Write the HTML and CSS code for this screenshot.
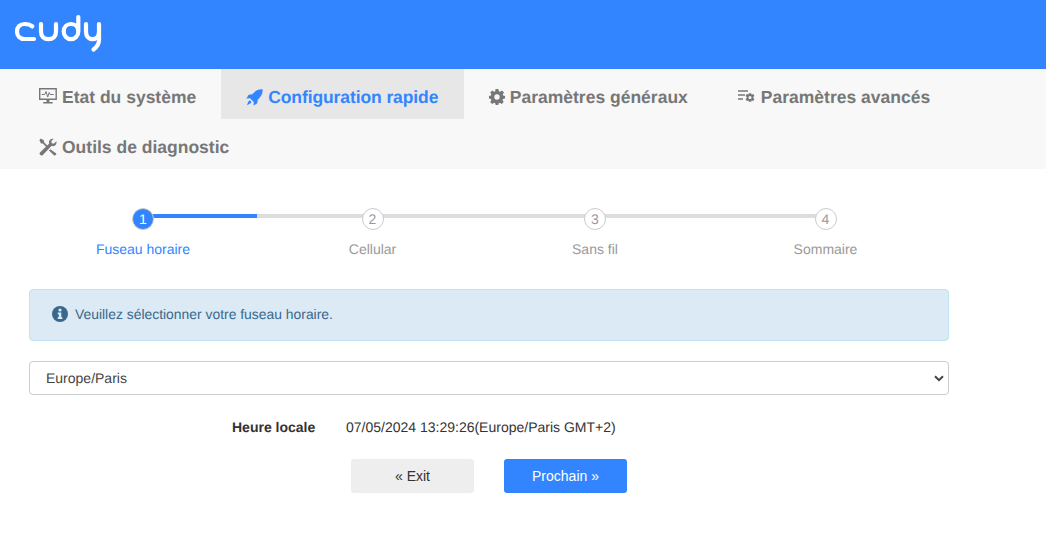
FILE: index.html
```html
<!DOCTYPE html>
<html lang="fr">
<head>
<meta charset="utf-8">
<title>Cudy</title>
<link rel="stylesheet" href="styles.css">
</head>
<body>
<header class="topbar">
  <svg class="logo" width="90" height="40" viewBox="0 0 90 40" fill="none" stroke="#fff" stroke-width="4.200" stroke-linecap="round">
    <path d="M20.300 12.400C18.700 10.900 16 10 12.500 10 8 10 5 13 5 17.500 5 22 8 25 12.500 25H22"/>
    <path d="M29 10V17.500C29 22.500 32 25.200 36.500 25.200 41 25.200 44 22.500 44 17.500V10"/>
    <path d="M66.300 3V17.500C66.300 22 63 25.200 59 25.200 55 25.200 51.700 22 51.700 17.500 51.700 13 55 10 59 10 63 10 66.300 13 66.300 17.500"/>
    <path d="M74 10V17.500C74 22.500 76.500 25.200 80.500 25.200 84.500 25.200 87 22.500 87 17.500V10M87 17V26C87 30 85 33 81.500 35.500"/>
  </svg>
</header>

<nav class="tabs">
  <a class="tab">
    <svg class="ico" width="18" height="18" viewBox="1.300 2 18 18"><path fill="none" stroke="currentColor" stroke-width="1.400" d="M2 2.700H18.500V13.300H2Z"/><path fill="none" stroke="currentColor" stroke-width="1" d="M4 8.500H7L8.300 5.500 10 11 11.500 6.500 12.500 8.500H16"/><path fill="currentColor" d="M8.800 14H11.700V16H15V17.500H5.500V16H8.800Z"/></svg>
    Etat du système
  </a>
  <a class="tab tab-active">
    <svg class="ico" width="17" height="17" viewBox="0 0 17 17"><path fill="currentColor" d="M16.600.4C16.900 4.500 15.300 8 11.700 10.700L11.300 14.300 7.500 16.600 7.800 13 4 9.200.4 9.500 2.700 5.700 6.300 5.300C9 1.700 12.500.1 16.600.4ZM3 11.700C4 11.400 5 12 5.300 13 5.200 14.500 3 15.300.9 16.100 1.700 14 2.300 12.500 3 11.700Z"/></svg>
    Configuration rapide
  </a>
  <a class="tab">
    <svg class="ico" width="16" height="16" viewBox="0 0 16 16"><path fill="currentColor" fill-rule="evenodd" d="M6.600 0H9.400L9.900 2.200 11 2.700 13 1.500 15 3.500 13.700 5.400 14.200 6.500 16 6.900V9.500L14 10 13.500 11.100 14.700 13 12.700 15 10.800 13.800 9.700 14.200 9.300 16H6.700L6.200 14.200 5.100 13.800 3.200 15 1.200 13 2.400 11.100 1.900 10 0 9.500V6.900L1.900 6.500 2.400 5.400 1.200 3.500 3.200 1.500 5.100 2.700 6.200 2.200ZM8 5.300A2.700 2.700 0 1 0 8 10.700 2.700 2.700 0 1 0 8 5.300Z"/></svg>
    Paramètres généraux
  </a>
  <a class="tab">
    <svg class="ico" width="18" height="16" viewBox="0 0 18 16"><path fill="none" stroke="currentColor" stroke-width="1.400" d="M0 2H10M0 6H7M0 10H5"/><path transform="translate(-1.200 -1.700) scale(1.200)" fill="currentColor" fill-rule="evenodd" d="M10 5H12L12.300 6.100 13.700 5.600 14.700 7.200 13.700 8 13.700 9 14.700 9.800 13.700 11.400 12.300 10.900 12 12H10L9.700 10.900 8.300 11.400 7.300 9.800 8.300 9 8.300 8 7.300 7.200 8.300 5.600 9.700 6.100ZM11 7.200A1.300 1.300 0 1 0 11 9.800 1.300 1.300 0 1 0 11 7.200Z"/></svg>
    Paramètres avancés
  </a>
  <a class="tab">
    <svg class="ico" width="18" height="18" viewBox="0 0 18 18"><path fill="currentColor" d="M1.800.6 5 2.500V4.300L9.500 8.800 8.300 10 3.800 5.500H2L.4 2.300ZM17.300 3.300C17.800 5 17.300 6.700 16 7.600 14.900 8.300 13.700 8.300 12.700 7.800L3.800 16.900C3 17.700 1.800 17.600 1.100 16.800 .4 16.100.5 15 1.200 14.300L10.200 5.400C9.700 4.200 9.900 2.900 10.800 1.900 11.800 .8 13.300.4 14.700.8L12.300 3.200 12.800 5.300 14.900 5.800ZM11.200 11.300 16.600 14.900C17.500 15.600 17.500 16.600 16.700 17.100 16 17.700 15.300 17.500 14.700 16.900L10 12.500Z"/></svg>
    Outils de diagnostic
  </a>
</nav>

<main class="content">
  <ol class="steps">
    <li class="step step-first step-current">
      <span class="step-num">1</span>
      <span class="step-label">Fuseau horaire</span>
    </li>
    <li class="step">
      <span class="step-num">2</span>
      <span class="step-label">Cellular</span>
    </li>
    <li class="step">
      <span class="step-num">3</span>
      <span class="step-label">Sans fil</span>
    </li>
    <li class="step step-last">
      <span class="step-num">4</span>
      <span class="step-label">Sommaire</span>
    </li>
  </ol>

  <div class="alert">
    <svg class="alert-ico" width="16" height="16" viewBox="0 0 16 16"><circle cx="8" cy="8" r="8" fill="currentColor"/><circle cx="8" cy="4" r="1.600" fill="#dbeaf5"/><path fill="#dbeaf5" d="M5.700 6.500H9.300V11.300H10.400V13H5.700V11.300H6.800V8.200H5.700Z"/></svg>
    Veuillez sélectionner votre fuseau horaire.
  </div>

  <div class="select-box">
    <span>Europe/Paris</span>
    <svg width="10" height="7" viewBox="0 0 10 7"><path fill="none" stroke="#444" stroke-width="2" d="M1 1.200 5 5.200 9 1.200"/></svg>
  </div>

  <div class="time-row">
    <span class="time-label">Heure locale</span>
    <span class="time-value">07/05/2024 13:29:26(Europe/Paris GMT+2)</span>
  </div>

  <div class="actions">
    <button class="btn btn-grey" type="button">« Exit</button>
    <button class="btn btn-blue" type="button">Prochain »</button>
  </div>
</main>
</body>
</html>
```

FILE: styles.css
```css
* {
  box-sizing: border-box;
}

html,
body {
  margin: 0;
  padding: 0;
}

body {
  background: #fff;
  color: #333;
  font-family: "Liberation Sans", Arial, sans-serif;
  font-size: 14px;
  overflow: hidden;
  text-rendering: geometricPrecision;
}

.topbar {
  height: 69px;
  background: #3385ff;
  padding: 14px 0 0 12px;
}

.logo {
  display: block;
}

.tabs {
  display: flex;
  flex-wrap: wrap;
  padding-left: 14px;
  background: #f8f8f8;
}

.tab {
  display: flex;
  align-items: center;
  gap: 5px;
  height: 50px;
  padding: 6px 25px 0;
  color: #777;
  font-size: 17.5px;
  font-weight: 700;
  white-space: nowrap;
}

.tab-active {
  padding-right: 25.5px;
  background: #e7e7e7;
  color: #3385ff;
  letter-spacing: -0.1px;
}

.ico {
  flex: none;
}

.content {
  width: 920px;
  margin-left: 29px;
}

.steps {
  display: grid;
  grid-template-columns: 228px 231px 214px 247px;
  margin: 0;
  padding: 39px 0 0;
  list-style: none;
}

.step {
  position: relative;
  display: flex;
  flex-direction: column;
  align-items: center;
  height: 81px;
  color: #999;
}

.step::before {
  content: "";
  position: absolute;
  top: 6px;
  left: 0;
  right: 0;
  height: 4px;
  background: #ddd;
}

.step-first::before {
  left: 50%;
  right: -1px;
}

.step-last::before {
  right: 50%;
}

.step-current::before {
  background: #3385ff;
}

.step-num {
  position: relative;
  display: flex;
  align-items: center;
  justify-content: center;
  width: 22px;
  height: 22px;
  border: 1px solid #ccc;
  border-radius: 50%;
  background: #fff;
  color: #999;
  font-size: 14px;
}

.step-current .step-num {
  background: #3385ff;
  color: #fff;
}

.step-label {
  margin-top: 11px;
  font-size: 14px;
  line-height: 16px;
}

.step-current .step-label {
  color: #3385ff;
}

.alert {
  display: flex;
  align-items: center;
  gap: 7px;
  height: 52px;
  padding: 0 0 2px 22px;
  border: 1px solid #bfe3f0;
  border-radius: 4px;
  background: #dbeaf5;
  color: #39688c;
  font-size: 13.9px;
}

.alert-ico {
  flex: none;
}

.select-box {
  display: flex;
  align-items: center;
  justify-content: space-between;
  height: 34px;
  margin-top: 20px;
  padding: 0 4px 0 16px;
  border: 1px solid #ccc;
  border-radius: 4px;
  background: #fff;
  color: #444;
  font-size: 14px;
}

.time-row {
  display: flex;
  align-items: center;
  height: 20px;
  margin-top: 22px;
  padding-left: 203px;
}

.time-label {
  width: 114px;
  font-weight: 700;
}

.time-value {
  color: #333;
}

.actions {
  display: flex;
  gap: 30px;
  margin-top: 22px;
  padding-left: 322px;
}

.btn {
  width: 123px;
  height: 34px;
  border: 0;
  border-radius: 3px;
  font-family: inherit;
  font-size: 14px;
  padding: 0;
}

.btn-grey {
  background: #eee;
  color: #333;
}

.btn-blue {
  background: #3385ff;
  color: #fff;
}
```
